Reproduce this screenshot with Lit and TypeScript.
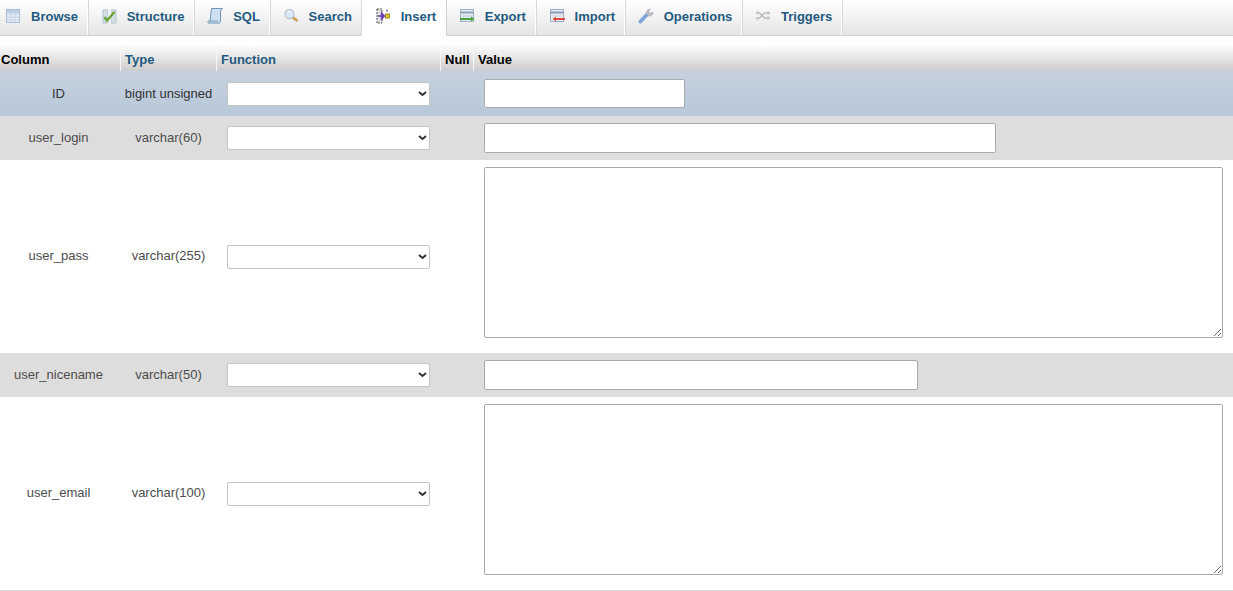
import { LitElement, html, css, svg } from "lit";
import { customElement } from "lit/decorators.js";

const icons: Record<string, unknown> = {
  Browse: svg`<rect x="1.5" y="1.5" width="13" height="13" fill="#e6eef7" stroke="#a9bfd8"/><path d="M2 6h12M2 9h12M2 12h12M6 5v9M10 5v9" stroke="#c2d2e3" fill="none"/><rect x="2" y="2" width="12" height="3" fill="#bccfe3"/>`,
  Structure: svg`<path d="M2 2h5v13H2zM10 2h5v13h-5z" fill="#d5dfe6" stroke="#b4c2cd"/><path d="M7 2h3v13H7z" fill="#eef2f5"/><path d="M3.500 9l2.500 3.500L13.500 4" stroke="#6aa436" stroke-width="2.400" fill="none"/>`,
  SQL: svg`<path d="M4.500 .5h11l-2 2.500v10.500c0 1-.7 1.500-1.500 1.500H1.500c-1 0-1-2 .6-2H3z" fill="#cfe0f2" stroke="#6d93b8"/><path d="M2 13h9" stroke="#7fa0c0" fill="none"/>`,
  Search: svg`<circle cx="6.500" cy="6" r="4.500" fill="#d8e8f6" stroke="#b9c5cf" stroke-width="1.300"/><path d="M5 4c1-1 2.500-1 3 0" stroke="#fff" fill="none"/><path d="M10 9.500l4.500 3.500" stroke="#cf9a58" stroke-width="2.800" fill="none"/>`,
  Insert: svg`<rect x="2" y="1" width="5" height="14" fill="#e3e3e3" stroke="#555" stroke-dasharray="2 1"/><path d="M3 8h6M6.500 5l3 3-3 3z" stroke="#6b3fb5" fill="#6b3fb5" stroke-width="1.400"/><rect x="10.500" y="6" width="4" height="4" fill="#e8c628" stroke="#8a7414" stroke-width=".8"/><circle cx="12" cy="2.500" r="1" fill="#7b62c4"/>`,
  Export: svg`<rect x="1.500" y="1.500" width="13" height="12" fill="#e3ecf2" stroke="#9db0bf"/><path d="M1.500 4.500h13" stroke="#8ea4b6" stroke-width="2"/><path d="M3 8h10" stroke="#bccad6" fill="none"/><path d="M1 11h12" stroke="#4aa23e" stroke-width="2"/><path d="M12 8.500l3.500 2.500-3.500 2.500z" fill="#4aa23e"/>`,
  Import: svg`<rect x="1.500" y="1.500" width="13" height="12" fill="#e9eef5" stroke="#9baac4"/><path d="M1.500 4.500h13" stroke="#8b9bbd" stroke-width="2"/><path d="M3 8h10" stroke="#c8cfdb" fill="none"/><path d="M6 11h10" stroke="#de4a40" stroke-width="2"/><path d="M7 8.500l-3.500 2.500 3.500 2.500z" fill="#de4a40"/>`,
  Operations: svg`<path d="M2.500 13.500L9.500 6" stroke="#7ea6dc" stroke-width="3.800" stroke-linecap="round" fill="none"/><path d="M8 5.500c0-2.600 2-4.500 4.500-4.500l-1.700 2.500 1.400 1.700 2.800-1.200c.2 2.500-1.800 4.400-4.300 4.100z" fill="#b9bcc0" stroke="#a5a8ac" stroke-width=".5"/>`,
  Triggers: svg`<path d="M1 5h3.500l5 5h3M1 10h3.500l5-5h3" stroke="#bbb" stroke-width="1.500" fill="none"/><path d="M12.500 3l3 2-3 2zM12.500 8l3 2-3 2z" fill="#bbb"/><path d="M1 3h3M1 12h3" stroke="#d5d5d5" fill="none"/>`,
};

const tabs = Object.keys(icons);
const rows = [
  { name: "ID", type: "bigint unsigned", w: "short", marked: true },
  { name: "user_login", type: "varchar(60)", w: "mid", shaded: true },
  { name: "user_pass", type: "varchar(255)", area: true },
  { name: "user_nicename", type: "varchar(50)", w: "nice", shaded: true },
  { name: "user_email", type: "varchar(100)", area: true },
];

@customElement("app-root")
export class AppRoot extends LitElement {
  static styles = css`
    :host { display: block; width: 1233px; height: 591px; overflow: hidden; background: #fff;
      font-family: "Liberation Sans", Arial, sans-serif; font-size: 13px; color: #4c4c4c; }
    .bar { display: flex; height: 36px; box-sizing: border-box; background: linear-gradient(#fff, #e5e5e5); border-bottom: 1px solid #d0d0d0; }
    .tab { display: flex; align-items: center; gap: 9.7px; padding: 0 9px 2px 13px; box-sizing: border-box; font-weight: 700; color: #235a81;
      border-right: 1px solid #fff; box-shadow: 1px 0 0 #d8d8d8; height: 35px; }
    .tab:first-child { padding-left: 5px; gap: 10px; }
    .tab svg { width: 16px; height: 16px; flex: none; filter: blur(.3px); margin-bottom: 2px; }
    .tab.on { background: #fff; height: 36px; padding-bottom: 3px; box-shadow: -1px 0 0 #d8d8d8, 1px 0 0 #d0d0d0; border-right-color: transparent; }
    .grid { display: grid; grid-template-columns: 120px 96px 224px 33px 1fr; }
    .head { margin-top: 8px; height: 27px; align-items: center; background: linear-gradient(#fff, #ccc); color: #000; font-weight: 700; }
    .head > div { height: 100%; box-sizing: border-box; display: flex; align-items: center; padding: 4px 0 0 4px; border-left: 1px solid #f6f6f6; }
    .head > div:first-child { padding-left: 1px; border-left: 0; }
    .head .link { color: #235a81; }
    .row { align-items: center; }
    .row .name { text-align: center; padding: 0 3px 2px 0; }
    .row .type { text-align: center; padding: 0 0 2px 1px; }
    .row.area .name, .row.area .type { padding-bottom: 3px; }
    .row .fn { padding-left: 11px; display: flex; }
    .row .val { padding: 7px 9px 7px 11px; display: flex; }
    .row.area .val { padding-bottom: 15px; }
    .row.first .val { padding: 8px 9px 8px 11px; }
    .row.first input { height: 29px; }
    .row.first .name, .row.first .type { padding-bottom: 1px; color: #333; }
    .row.marked { background: linear-gradient(#c5d1de, #b8c8d9); }
    .row.shaded { background: #ddd; }
    select { appearance: none; width: 203px; height: 24px; box-sizing: border-box; border: 1px solid #c4c4c4; border-radius: 2px; font: 13px "Liberation Sans", sans-serif;
      background: #fff url("data:image/svg+xml,%3Csvg xmlns='http://www.w3.org/2000/svg' width='9' height='6'%3E%3Cpath d='M1 1l3.500 3L8 1' fill='none' stroke='%23333' stroke-width='2'/%3E%3C/svg%3E") no-repeat right 2.500px center; }
    input, textarea { box-sizing: border-box; background: #fff; border: 1px solid #aaa; border-radius: 2px; padding: 2px; margin: 0; display: block; }
    input { height: 30px; }
    .short { width: 201px; }
    .mid { width: 512px; }
    .nice { width: 434px; }
    textarea { width: 739px; height: 171px; }
    .end { border-top: 1px solid #ddd; }
  `;

  render() {
    return html`
      <div class="bar">
        ${tabs.map((t) => html`<div class="tab ${t === "Insert" ? "on" : ""}"><svg viewBox="0 0 16 16">${icons[t]}</svg>${t}</div>`)}
      </div>
      <div class="grid head">
        <div>Column</div><div class="link">Type</div><div class="link">Function</div><div>Null</div><div>Value</div>
      </div>
      ${rows.map((r) => html`
        <div class="grid row ${r.marked ? "marked first" : ""} ${r.shaded ? "shaded" : ""} ${r.area ? "area" : ""}">
          <div class="name">${r.name}</div>
          <div class="type">${r.type}</div>
          <div class="fn"><select><option></option></select></div>
          <div></div>
          <div class="val">${r.area ? html`<textarea></textarea>` : html`<input class="${r.w}" />`}</div>
        </div>`)}
      <div class="end"></div>
    `;
  }
}
